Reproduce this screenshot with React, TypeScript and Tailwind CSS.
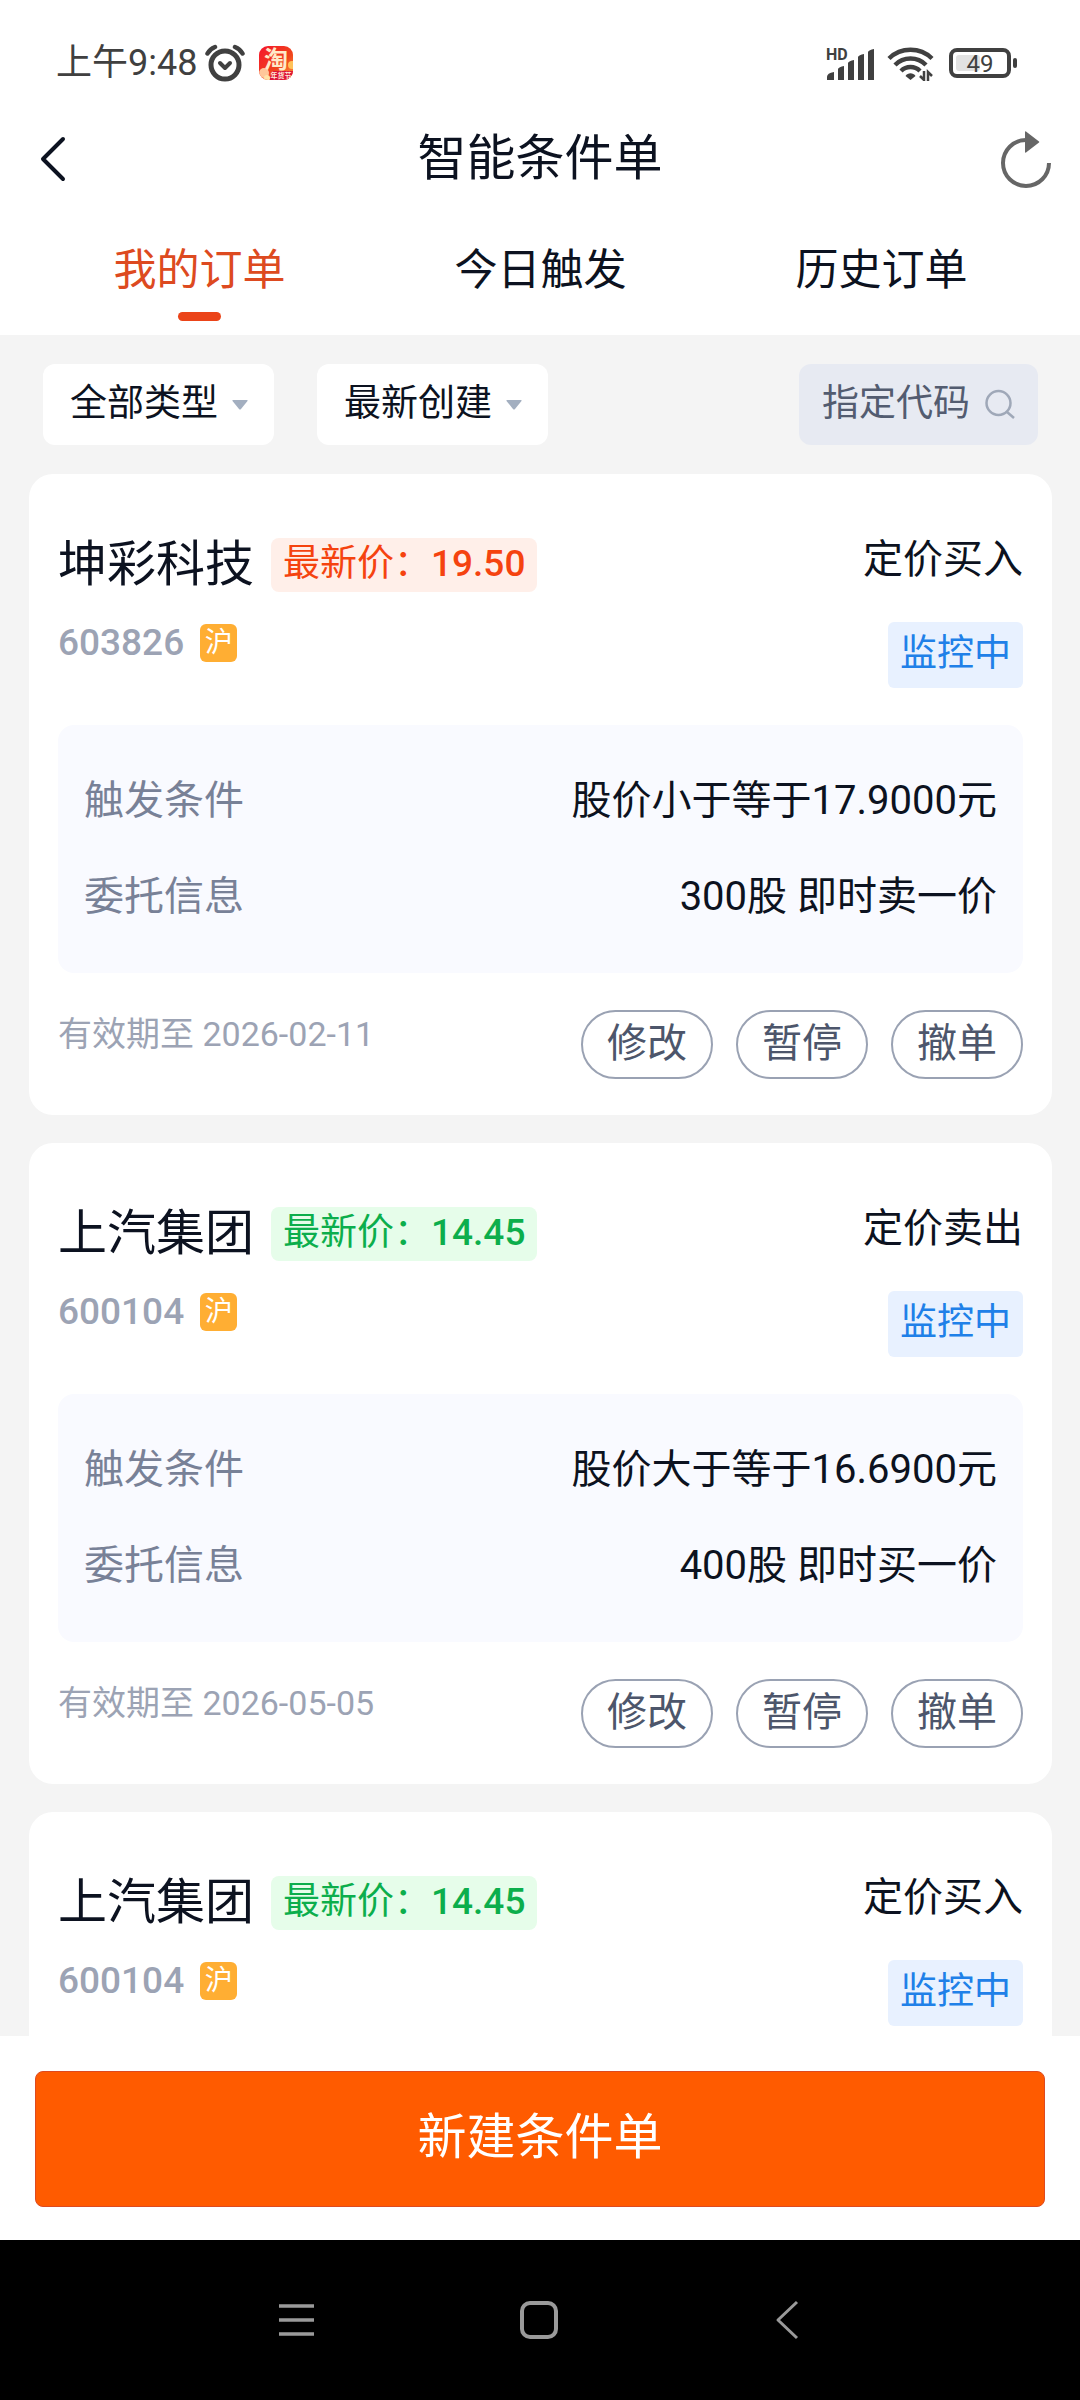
import React from "react";

interface Order {
  id: number;
  name: string;
  code: string;
  price: string;
  rising: boolean;
  type: string;
  condition?: string;
  entrust?: string;
  expires?: string;
}

const orders: Order[] = [
  {
    id: 1,
    name: "坤彩科技",
    code: "603826",
    price: "19.50",
    rising: true,
    type: "定价买入",
    condition: "股价小于等于17.9000元",
    entrust: "300股 即时卖一价",
    expires: "2026-02-11",
  },
  {
    id: 2,
    name: "上汽集团",
    code: "600104",
    price: "14.45",
    rising: false,
    type: "定价卖出",
    condition: "股价大于等于16.6900元",
    entrust: "400股 即时买一价",
    expires: "2026-05-05",
  },
  {
    id: 3,
    name: "上汽集团",
    code: "600104",
    price: "14.45",
    rising: false,
    type: "定价买入",
  },
];

const tabs = ["我的订单", "今日触发", "历史订单"];
const actions = ["修改", "暂停", "撤单"];

const StatusBar = () => (
  <div className="flex h-[126px] items-center justify-between pr-[63px] pl-14 text-[#404040]">
    <div className="flex items-center">
      <span className="text-[36px] leading-[44px]">上午9:48</span>
      <svg className="ml-2 h-[38px] w-10" viewBox="0 0 40 38" fill="none" stroke="currentColor">
        <circle cx="20" cy="21" r="14" strokeWidth="5" />
        <path d="M2.500 9.500Q5 5 10 3M37.500 9.500Q35 5 30 3" strokeWidth="4.500" strokeLinecap="round" />
        <path d="m15 19 5 5 5-5" strokeWidth="4" strokeLinecap="round" strokeLinejoin="round" />
      </svg>
      <svg className="ml-[14px] size-[34px]" viewBox="0 0 34 34">
        <defs>
          <linearGradient id="tb" x1="0" y1="0" x2="1" y2="1">
            <stop offset="0" stopColor="#f5142c" />
            <stop offset="0.6" stopColor="#f0451c" />
            <stop offset="1" stopColor="#ff9a3c" />
          </linearGradient>
          <clipPath id="tbClip">
            <rect width="34" height="34" rx="9" />
          </clipPath>
        </defs>
        <g clipPath="url(#tbClip)">
          <rect width="34" height="34" fill="url(#tb)" />
          <circle cx="33" cy="19" r="4" fill="#ffc25a" />
          <path d="M14 25h20v9H10z" fill="#dd1438" />
          <circle cx="5" cy="27" r="5" fill="#ffc79a" />
          <circle cx="8" cy="32" r="3" fill="#ffe3a8" />
          <text x="17" y="22" fontSize="24" fontWeight="700" fill="#ffe9c9" textAnchor="middle">
            淘
          </text>
          <text x="22" y="32" fontSize="7" fontWeight="700" fill="#ffe9d9" textAnchor="middle">
            年货节
          </text>
        </g>
      </svg>
    </div>

    <div className="flex items-center">
      <svg className="h-9 w-[52px] overflow-visible" viewBox="0 0 52 36" fill="currentColor">
        <text x="1" y="15" fontSize="16" fontWeight="700">
          HD
        </text>
        <path d="M2 35v-3q0-4 7-5v8zM13 35V24q1-2 6-3v14zM23 35V18q1-2 6-3v20zM33 35V12q1-2 6-3v26zM43 35V7q1-2 6-3v31z" />
      </svg>
      <svg className="ml-[10px] h-9 w-12" viewBox="0 0 48 36" fill="none" stroke="currentColor" strokeWidth="4.500">
        <path d="M2 13.500a31 31 0 0 1 43 0" />
        <path d="M8 20a22 22 0 0 1 31 0" />
        <path d="M14 26a13.500 13.500 0 0 1 19 0" />
        <path d="m23.500 35-5-4a6 6 0 0 1 10 0z" fill="currentColor" stroke="none" />
        <path d="M37 26v9l-4-4M41 36v-9l4 4" strokeWidth="2.500" />
      </svg>
      <svg className="ml-[14px] h-[30px] w-[68px] overflow-visible" viewBox="0 0 68 30" fill="none">
        <rect x="2" y="2" width="58" height="26" rx="6" stroke="currentColor" strokeWidth="4" />
        <rect x="7" y="7" width="24" height="16" rx="3" fill="#e2e2e2" />
        <rect x="64" y="10" width="4" height="10" rx="2" fill="currentColor" />
        <text x="31" y="24" fontSize="24" fill="currentColor" textAnchor="middle">
          49
        </text>
      </svg>
    </div>
  </div>
);

const SelectBox = ({ label, text }: { label: string; text: string }) => (
  <div className="relative">
    <select
      aria-label={label}
      className="h-[81px] w-[231px] appearance-none rounded-xl bg-white pb-[2px] pl-[27px] text-[37px] text-[#0c1220]"
    >
      <option>{text}</option>
    </select>
    <svg className="pointer-events-none absolute top-9 right-[26px] h-[10px] w-4" viewBox="0 0 16 10" fill="#a3afc0">
      <path d="M1 0h14q1 0 .5 1L9 9q-1 1-2 0L.5 1Q0 0 1 0z" />
    </svg>
  </div>
);

const OrderCard = ({ order }: { order: Order }) => (
  <article className="rounded-3xl bg-white px-[29px] pt-16 pb-9">
    <div className="flex justify-between">
      <div>
        <div className="flex h-[54px] items-center">
          <h2 className="text-[49px] leading-[54px]">{order.name}</h2>
          <span
            className={`ml-[17px] flex h-[54px] items-center rounded-lg px-3 pb-[3px] text-[37px] leading-none ${
              order.rising ? "bg-[#ffefe9] text-[#f5430f]" : "bg-[#e6fdea] text-[#0cae4c]"
            }`}
          >
            最新价：<b className="font-medium">{order.price}</b>
          </span>
        </div>
        <div className="mt-8 flex h-[38px] items-center gap-4">
          <span className="text-[37px] leading-[38px] font-medium text-[#9ca3b4]">{order.code}</span>
          <span className="flex h-[38px] w-[37px] items-center justify-center rounded-md bg-[#ffae33] text-[28px] leading-none text-white">
            沪
          </span>
        </div>
      </div>
      <div className="flex flex-col items-end">
        <span className="text-[40px] leading-[44px]">{order.type}</span>
        <span className="mt-10 flex h-[66px] items-center rounded-md bg-[#e8f1ff] px-3 pb-[3px] text-[37px] leading-none text-[#2080e8]">
          监控中
        </span>
      </div>
    </div>

    {order.condition && (
      <>
        <dl className="mt-[37px] flex flex-col gap-9 rounded-2xl bg-[#f9faff] px-[26px] py-[46px] text-[40px] leading-[60px]">
          <div className="flex justify-between">
            <dt className="text-[#788197]">触发条件</dt>
            <dd>{order.condition}</dd>
          </div>
          <div className="flex justify-between">
            <dt className="text-[#788197]">委托信息</dt>
            <dd>{order.entrust}</dd>
          </div>
        </dl>
        <div className="mt-[37px] flex items-start justify-between">
          <span className="text-[34px] leading-[48px] text-[#9ca3b4]">有效期至 {order.expires}</span>
          <div className="flex gap-[23px]">
            {actions.map((action) => (
              <button
                key={action}
                type="button"
                className="h-[69px] w-[132px] rounded-full border-2 border-[#9aa2b3] pb-[2px] text-[40px] leading-none text-[#4d566b]"
              >
                {action}
              </button>
            ))}
          </div>
        </div>
      </>
    )}
  </article>
);

const App: React.FC = () => {
  return (
    <div
      lang="zh-CN"
      className="flex h-screen flex-col bg-[#f4f4f4] font-[Roboto,'Noto_Sans_CJK_SC',sans-serif] text-[#0c1220]"
    >
      <header className="bg-white">
        <StatusBar />
        <div className="flex h-[66px] items-center justify-between pr-7 pl-[39px]">
          <button type="button" aria-label="返回" className="w-[41px]">
            <svg className="h-[46px] w-7" viewBox="0 0 28 46" fill="none" stroke="currentColor" strokeWidth="4">
              <path d="M24 3 4 23l20 20" strokeLinecap="round" strokeLinejoin="round" />
            </svg>
          </button>
          <h1 className="text-[49px] leading-[60px]">智能条件单</h1>
          <button type="button" aria-label="刷新">
            <svg className="h-[58px] w-[52px]" viewBox="0 0 52 58" fill="none">
              <path d="M49 33A23 23 0 1 1 26 10" stroke="#666" strokeWidth="4" />
              <path d="M25 2q0-1 1-.500L39 11.500q.700.500 0 1L26 22.500q-1 .500-1-.500z" fill="#666" />
            </svg>
          </button>
        </div>
        <nav className="flex pt-12 pr-7 pb-[14px] pl-[29px]">
          {tabs.map((tab, i) => (
            <button
              key={tab}
              type="button"
              className={`flex flex-1 flex-col items-center text-[43px] leading-[60px] ${i === 0 ? "text-[#dd4a20]" : ""}`}
            >
              {tab}
              {i === 0 && <span className="mt-3 h-[9px] w-[43px] rounded-full bg-[#eb4419]" />}
            </button>
          ))}
        </nav>
      </header>

      <div className="flex items-center py-[29px] pr-[42px] pl-[43px]">
        <SelectBox label="订单类型" text="全部类型" />
        <div className="ml-[43px]">
          <SelectBox label="排序方式" text="最新创建" />
        </div>
        <label className="ml-auto flex h-[81px] w-[239px] items-center gap-3 rounded-xl bg-[#e7eaf2] px-[23px] pb-[2px]">
          <input
            type="text"
            aria-label="指定代码"
            placeholder="指定代码"
            className="min-w-0 flex-1 text-[37px] placeholder:text-[#535c70] focus:outline-none"
          />
          <svg className="size-[30px]" viewBox="0 0 30 30" fill="none" stroke="#9fa8b8" strokeWidth="2.500">
            <circle cx="13.500" cy="14" r="12" />
            <path d="m22 23 7 6" />
          </svg>
        </label>
      </div>

      <main className="flex min-h-0 flex-1 flex-col gap-7 overflow-y-auto pr-7 pl-[29px] [scrollbar-width:none]">
        {orders.map((order) => (
          <OrderCard key={order.id} order={order} />
        ))}
      </main>

      <footer className="bg-white px-[35px] pt-[35px] pb-[33px]">
        <button
          type="button"
          className="h-[136px] w-full rounded-lg border border-[#dd4a20] bg-[#ff5b00] pb-[2px] text-[49px] text-white"
        >
          新建条件单
        </button>
      </footer>

      {/* system navigation */}
      <div className="flex h-40 items-center justify-between bg-black px-[276px] text-[#9a9a9a]">
        <svg className="size-10" viewBox="0 0 40 40" fill="none" stroke="currentColor" strokeWidth="3.500">
          <path d="M3 6h35M3 20h35M3 34h35" />
        </svg>
        <svg className="size-10" viewBox="0 0 40 40" fill="none" stroke="currentColor" strokeWidth="4">
          <rect x="2" y="3" width="34" height="34" rx="8" />
        </svg>
        <svg className="size-10" viewBox="0 0 40 40" fill="none" stroke="currentColor" strokeWidth="3">
          <path d="M33 2 14 20l19 18" strokeLinejoin="round" />
        </svg>
      </div>
    </div>
  );
};

export default App;
